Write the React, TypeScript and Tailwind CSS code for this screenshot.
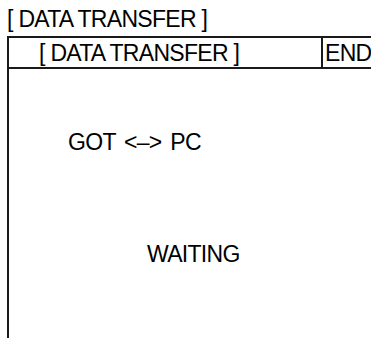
import React from 'react';

const font = { fontFamily: '"Liberation Sans", Arial, sans-serif' };

export default function App() {
    return (
        <div className="w-[371px] h-[338px] overflow-hidden bg-white text-black text-[23px] leading-[24px] tracking-[-0.7px]" style={font}>
            {/* Screen title */}
            <div className="pl-[7px] pt-[7px] h-[36px]">[ DATA TRANSFER ]</div>

            {/* Panel */}
            <div className="ml-[7px] w-[420px] h-[310px] border-l-2 border-t-2 border-[#1a1a1a]">
                <div className="flex h-[31px] border-b-2 border-[#1a1a1a]">
                    <div className="w-[314px] border-r-2 border-[#1a1a1a] pl-[30px] pt-[3px]">[ DATA TRANSFER ]</div>
                    <div className="pl-[2px] pt-[3px]">END</div>
                </div>

                <div className="pl-[59px] pt-[61px] [word-spacing:3px]">GOT &lt;–&gt; PC</div>
                <div className="pl-[138px] pt-[88px]">WAITING</div>
            </div>
        </div>
    );
}
